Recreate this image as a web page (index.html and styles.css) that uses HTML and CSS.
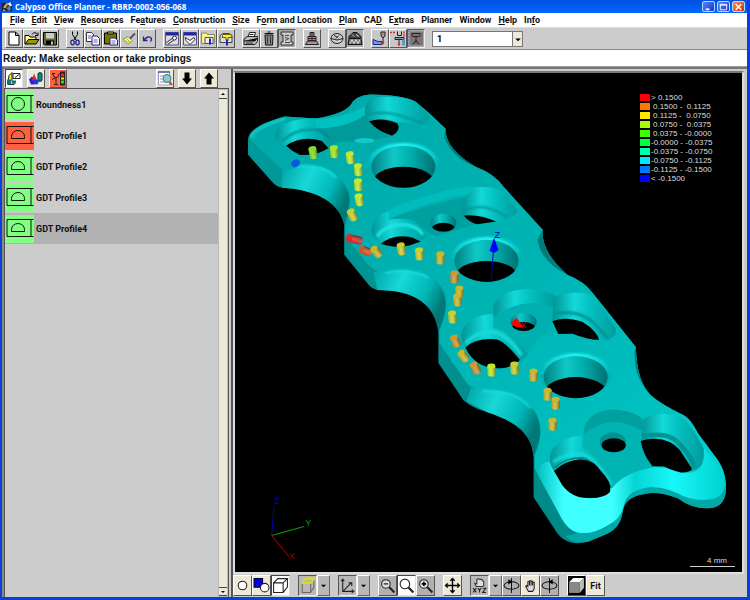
FILE: index.html
```
<!DOCTYPE html>
<html lang="en">
<head>
    <meta charset="UTF-8">
    <meta name="viewport" content="width=device-width, initial-scale=1">
    <title>Calypso Office Planner</title>
    <link rel="stylesheet" href="styles.css">
</head>
<body>
<div class="window">
    <header class="titlebar">
        <svg class="logo" viewBox="0 0 12 12"><path fill="#222" d="M0 2h11v9H0z"/><path fill="#d96" d="M1 7l4-5 2 1-3 5z"/><path fill="#eee" d="M6 3l3-2 2 4-2 1zM1 9l3 1-2 1z"/><path fill="#48c" d="M5 8l3-3 2 4-3 2z"/></svg>
        <h1>Calypso Office Planner - RBRP-0002-056-068</h1>
        <div class="controls">
            <button aria-label="Minimize"><svg viewBox="0 0 12 11"><path d="M3 8h4" stroke="#fff" stroke-width="2"/></svg></button>
            <button aria-label="Maximize"><svg viewBox="0 0 12 11"><path d="M2.5 2.5h7v6h-7zM2 3.5h8" fill="none" stroke="#fff"/></svg></button>
            <button class="close" aria-label="Close"><svg viewBox="0 0 12 11"><path d="M3 2.5l6 6M9 2.5l-6 6" stroke="#fff" stroke-width="1.6"/></svg></button>
        </div>
    </header>

    <nav class="menu">
        <button><u>F</u>ile</button>
        <button><u>E</u>dit</button>
        <button><u>V</u>iew</button>
        <button><u>R</u>esources</button>
        <button>Fe<u>a</u>tures</button>
        <button><u>C</u>onstruction</button>
        <button><u>S</u>ize</button>
        <button>F<u>o</u>rm and Location</button>
        <button><u>P</u>lan</button>
        <button>CA<u>D</u></button>
        <button>E<u>x</u>tras</button>
        <button>Planner</button>
        <button>Window</button>
        <button><u>H</u>elp</button>
        <button>In<u>f</u>o</button>
    </nav>

    <div class="toolbar">
        <div class="group">
            <button class="tool" aria-label="New"><svg viewBox="0 0 16 16"><path fill="#fff" stroke="#000" d="M3 1.500h6.500l3.500 3.500v9.500H3zM9.500 1.500V5H13"/></svg></button>
            <button class="tool" aria-label="Open"><svg viewBox="0 0 16 16"><path fill="#ff9" stroke="#000" d="M1 13.500V5h4l1 1.500h6V9"/><path fill="#990" stroke="#000" d="M1 13.500L4.500 9H15l-3 4.500z"/><path fill="none" stroke="#000" d="M8 4q3-4 5 0m1-2v3h-3"/></svg></button>
            <button class="tool" aria-label="Save"><svg viewBox="0 0 16 16"><path fill="#663" stroke="#000" d="M1.500 2h13v12.500h-12l-1-1z"/><path fill="#ccc" d="M4 2.500h8V8H4z"/><path fill="#000" d="M4 10h8v4H4z"/><path fill="#ccc" d="M9 11h2v3H9z"/></svg></button>
        </div>
        <div class="group">
            <button class="tool" aria-label="Cut"><svg viewBox="0 0 16 16"><path fill="none" stroke="#000" d="M5.500 1v3L9 9.500M10.500 1v3L7 9.500"/><g fill="none" stroke="#228" stroke-width="1.300"><ellipse cx="5.500" cy="12" rx="1.700" ry="2.300"/><ellipse cx="10.500" cy="12" rx="1.700" ry="2.300"/></g></svg></button>
            <button class="tool" aria-label="Copy"><svg viewBox="0 0 16 16"><path fill="#fff" stroke="#333" d="M1.500 2h5l2 2v7h-7z"/><path fill="#fff" stroke="#228" d="M7 5.500h5l2.500 2.500v6.500H7z"/><path stroke="#66a" d="M3 5.500h3M3 7.500h3M8.500 9.500h4M8.500 11.500h4"/></svg></button>
            <button class="tool" aria-label="Paste"><svg viewBox="0 0 16 16"><path fill="#770" stroke="#000" d="M1.500 2.500h12v11h-12z"/><path fill="#dd8" stroke="#000" d="M4.500 3.500v-2h6v2z"/><path fill="#fff" stroke="#228" d="M7 7.500h5l2.500 2v5H7z"/><path stroke="#66a" d="M8.500 10.500h4M8.500 12.500h4"/></svg></button>
            <button class="tool" aria-label="Copy format"><svg viewBox="0 0 16 16"><path fill="#ffb" stroke="#884" d="M2 9l5-3 4 4-4 4z"/><path stroke="#555" stroke-width="2" d="M9 8l5-5"/><path stroke="#aa0" d="M4 9l4 4M6 8l3 4"/></svg></button>
            <button class="tool" aria-label="Undo"><svg viewBox="0 0 16 16"><path fill="none" stroke="#228" stroke-width="1.300" d="M4.500 6v4h4M4.500 10q5-6 8-2 0 2-1 3"/></svg></button>
        </div>
        <div class="group">
            <button class="tool" aria-label="Settings"><svg viewBox="0 0 16 16"><path fill="#ddd" stroke="#558" d="M1.500 2h13v12.500h-13z"/><path fill="#22a" d="M2 2h12v3H2z"/><path stroke="#333" stroke-width="3" d="M3 13l7-5"/><path stroke="#fff" stroke-width="1.200" d="M3 13l7-5"/><circle cx="10.500" cy="7.500" r="2" fill="#fff" stroke="#333"/></svg></button>
            <button class="tool" aria-label="Check window"><svg viewBox="0 0 16 16"><path fill="#ddd" stroke="#558" d="M1.500 2h13v12.500h-13z"/><path fill="#22a" d="M2 2h12v3H2z"/><path fill="#fff" stroke="#333" d="M3 7l2 1 3 2 4-3 1 2-5 5-4-4z"/></svg></button>
            <button class="tool" aria-label="Plan folder"><svg viewBox="0 0 16 16"><path fill="#fe8" stroke="#886" d="M1.500 13V2.500h5l1 1.500h7v9z"/><path fill="#eee" stroke="#555" d="M5 7h8v6H5z"/><path stroke="#22c" stroke-width="2" d="M10 8v6"/></svg></button>
            <button class="tool" aria-label="Probe folder"><svg viewBox="0 0 16 16"><path fill="#ddd" stroke="#444" d="M2 5l3-2h6l3 2v7H2z"/><path fill="#fe3" stroke="#660" d="M5 4h8l1 3h-4v3H8V7H4z"/><path stroke="#22c" stroke-width="2" d="M9 9v6"/></svg></button>
        </div>
        <div class="group">
            <button class="tool" aria-label="Print"><svg viewBox="0 0 16 16"><path fill="#fff" stroke="#222" d="M5 7l1.500-5h6L11 7z"/><path fill="#bbb" stroke="#222" d="M1 8.500L4 6h10.500v5L12 14H1z"/><path stroke="#222" d="M1 10.500h11l2.500-3M6.500 4h4M3 12.500h7"/></svg></button>
            <button class="tool" aria-label="Delete"><svg viewBox="0 0 16 16"><path fill="#888" stroke="#111" d="M4 4.500h8l-.5 10h-7zM3.500 3h9M6.500 1.500h3"/><path stroke="#333" d="M6.500 6v7M9.500 6v7"/></svg></button>
            <button class="tool pressed" aria-label="Protocol"><svg viewBox="0 0 16 16"><path fill="#ccc" stroke="#333" d="M2 1.500h12v3h-2v7h2v3H2v-3h2v-7H2z"/><path fill="none" stroke="#444" d="M6 5h4M6 7l4 1-4 2M6 12h5"/></svg></button>
        </div>
        <div class="group">
            <button class="tool" aria-label="Machine"><svg viewBox="0 0 16 16"><path fill="#999" stroke="#222" d="M1.500 14l2-3.500h9l2 3.500zM4 10V6h8v4zM6 6V2h4v4M8 2v8M4 8h8"/><path stroke="#c22" d="M8 7v3"/></svg></button>
        </div>
        <div class="group">
            <button class="tool" aria-label="Probe sphere"><svg viewBox="0 0 16 16"><ellipse cx="8" cy="8" rx="6" ry="5" fill="#ccc" stroke="#222"/><path fill="none" stroke="#222" d="M2 8q6 3 12 0M5 5l4 2M10 5L7 8"/></svg></button>
            <button class="tool pressed" aria-label="Control panel"><svg viewBox="0 0 16 16"><path fill="#444" stroke="#111" d="M2 6l4-4h4l4 4v2H2z"/><path fill="#777" stroke="#111" d="M2 8h12l1 6H1z"/><path fill="none" stroke="#ddd" d="M5 4l2 2M9 4l3 2M3 13l2-4 2 4 2-4 2 4 2-4"/></svg></button>
        </div>
        <div class="group">
            <button class="tool" aria-label="Probe system"><svg viewBox="0 0 16 16"><path fill="#999" stroke="#222" d="M9 1.500h4v4l-2 2-2-2zM11 7v5"/><path fill="#69d" stroke="#228" d="M1 9l5 2h4v3H1z"/><circle cx="11" cy="12.500" r="1.200" fill="#d22"/></svg></button>
            <button class="tool" aria-label="Probe change"><svg viewBox="0 0 16 16"><path stroke="#e22" stroke-width="1.500" stroke-dasharray="2 1" d="M0 2h6M14 1v6"/><path fill="none" stroke="#222" d="M7.500 1v4h4V1"/><path fill="#999" stroke="#222" d="M5 7h9v2H5zM9 9v5"/><path fill="#69b" d="M12 9h3v6h-3z"/><circle cx="9" cy="14" r="1.200" fill="#d22"/></svg></button>
            <button class="tool pressed" aria-label="Navigator"><svg viewBox="0 0 16 16"><path fill="#777" d="M2 1h13v14H2z"/><path stroke="#22e" stroke-dasharray="1 2" d="M1 0v16"/><path fill="none" stroke="#222" d="M4 3h8v3H4zM8 6v6M5 14l3-4 3 4"/><path fill="none" stroke="#d33" d="M5 6l3 3 4-4"/></svg></button>
        </div>
        <div class="combo">
            <select aria-label="Probe number"><option>1</option><option>2</option></select>
            <span class="drop"><svg viewBox="0 0 8 8"><path d="M2 3h5L4.500 5.500z"/></svg></span>
        </div>
    </div>

    <p class="status">Ready: Make selection or take probings</p>

    <main class="work">
        <section class="side">
            <div class="sidebar-tools">
                <button class="tool light" aria-label="Measurement plan"><svg viewBox="0 0 16 16"><path fill="#ee2" stroke="#222" d="M3 5l3-3v9l2 1v2H2v-3z"/><path fill="#177" d="M1 9h4v5H1zM6 10h4v3H6z"/><path fill="#fff" stroke="#222" d="M7 3h7v5H7z"/><path stroke="#222" d="M9 7l4-3"/></svg></button>
                <button class="tool cream" aria-label="Features"><svg viewBox="0 0 16 16"><path fill="#22d" d="M1 9l3-3 4 4-2 4H3z"/><path fill="#e22" d="M6 3l3 7H4z"/><ellipse cx="8" cy="11.500" rx="2.500" ry="2.500" fill="#23f"/><path fill="#188" stroke="#033" d="M10 3q2-2 4 0v7q-2 2-4 0z"/></svg></button>
                <button class="tool alert" aria-label="Characteristics"><svg viewBox="0 0 16 16"><path fill="none" stroke="#222" d="M2.500 3l2 4h3l2-4M2 3h3M6 7v7M4 14h4M2 9l4-2"/><path fill="#222" d="M10 1h5v14h-5z"/><path fill="#e22" d="M11 3h3v3h-3z"/><path fill="#ee2" d="M11 7h3v2h-3z"/><path fill="#2d2" d="M11 10h3v3h-3z"/></svg></button>
                <span class="spacer"></span>
                <button class="tool cream" aria-label="Search"><svg viewBox="0 0 16 16"><path fill="#fff" stroke="#99b" d="M1.500 1.500h11v13h-11z"/><path fill="#22a" d="M1 1h12v1H1z"/><path stroke="#999" d="M3 5.500h4M3 8.500h3M3 11.500h5"/><circle cx="10" cy="8" r="4" fill="#8cc" stroke="#477"/><path stroke="#c44" stroke-width="2" d="M12.500 11.500l2.500 3"/></svg></button>
                <button class="tool cream" aria-label="Move down"><svg viewBox="0 0 16 16"><path d="M5.500 2h5v6H13l-5 6-5-6h2.500z"/></svg></button>
                <button class="tool cream" aria-label="Move up"><svg viewBox="0 0 16 16"><path d="M5.500 14h5V8H13L8 2 3 8h2.500z"/></svg></button>
            </div>
            <div class="list-box">
                <ul class="features">
                    <li><svg class="mark" viewBox="0 0 28 28"><path d="M28 4.500H1.500v17H28M25.500 4v18"/><circle cx="12.500" cy="13" r="6.500"/></svg>Roundness1</li>
                    <li><svg class="mark bad" viewBox="0 0 28 28"><use href="#profile"/></svg>GDT Profile1</li>
                    <li><svg class="mark" viewBox="0 0 28 28"><use href="#profile"/></svg>GDT Profile2</li>
                    <li><svg class="mark" viewBox="0 0 28 28"><use href="#profile"/></svg>GDT Profile3</li>
                    <li class="selected"><svg class="mark" viewBox="0 0 28 28"><use href="#profile"/></svg>GDT Profile4</li>
                </ul>
                <div class="scroll">
                    <button aria-label="Scroll up"><svg viewBox="0 0 8 8"><path d="M2 5h4L4 3z"/></svg></button>
                    <button aria-label="Scroll down"><svg viewBox="0 0 8 8"><path d="M2 3h4L4 5z"/></svg></button>
                </div>
            </div>
        </section>

        <section class="cad">
            <div class="view">
                <svg class="scene" viewBox="235 74 506 497" preserveAspectRatio="xMidYMid meet">
                    <defs>
                        <path id="profile" d="M28 4.500H1.500v17H28M25.500 4v18M6 16.500h13v-2a6.500 6 0 0 0-13 0z"/>
                        <linearGradient id="top" x1="0" y1="0" x2="1" y2="1"><stop offset="0" stop-color="#00a8a8"/><stop offset=".5" stop-color="#00b4b4"/><stop offset=".78" stop-color="#00c0c0"/><stop offset="1" stop-color="#08dede"/></linearGradient>
                        <linearGradient id="wall" x1="0" x2="1"><stop offset="0" stop-color="#008080"/><stop offset=".35" stop-color="#10c8c8"/><stop offset=".6" stop-color="#00b0b0"/><stop offset="1" stop-color="#007070"/></linearGradient>
                        <linearGradient id="pocket" x1="0" x2="1"><stop offset="0" stop-color="#009494"/><stop offset=".35" stop-color="#14d8d8"/><stop offset=".6" stop-color="#04c0c0"/><stop offset="1" stop-color="#009c9c"/></linearGradient>
                        <linearGradient id="curve" x1="0" y1="0" x2="1" y2=".4"><stop offset="0" stop-color="#00a4a4"/><stop offset=".4" stop-color="#18d8d8"/><stop offset=".75" stop-color="#00b8b8"/><stop offset="1" stop-color="#007878"/></linearGradient>
                        <linearGradient id="flat" x1="0" y1="0" x2="0" y2="1"><stop offset="0" stop-color="#009c9c"/><stop offset="1" stop-color="#008888"/></linearGradient>
                        <linearGradient id="chamfer" x1="0" x2="1"><stop offset="0" stop-color="#00c0c0"/><stop offset=".14" stop-color="#40ffff"/><stop offset=".4" stop-color="#40ffff"/><stop offset=".52" stop-color="#04d4d4"/><stop offset=".72" stop-color="#18f8f8"/><stop offset="1" stop-color="#00d0d0"/></linearGradient>
                        <linearGradient id="shade" x1="0" x2="1"><stop offset="0" stop-opacity=".1"/><stop offset=".4" stop-color="#fff" stop-opacity=".15"/><stop offset="1" stop-opacity=".45"/></linearGradient>
                        <radialGradient id="rim" cx=".5" cy=".15" r=".6"><stop offset="0" stop-color="#30ffff"/><stop offset=".5" stop-color="#10dcdc"/><stop offset="1" stop-color="#00b0b0"/></radialGradient>
                        <filter id="soft" x="-20%" y="-20%" width="140%" height="140%"><feGaussianBlur stdDeviation="1"/></filter>
                        <filter id="glow" x="-20%" y="-40%" width="140%" height="180%"><feGaussianBlur stdDeviation="3"/></filter>
                        <clipPath id="boreClip"><ellipse rx="32" ry="21" cy="1"/></clipPath>
                        <clipPath id="smallClip"><ellipse rx="13" ry="9"/></clipPath>
                        <g id="bore">
                            <ellipse rx="36" ry="22" cy="-1" fill="url(#rim)" filter="url(#soft)"/>
                            <ellipse rx="32" ry="21" cy="1" fill="url(#wall)"/>
                            <ellipse rx="32" ry="17" cy="18" clip-path="url(#boreClip)"/>
                        </g>
                        <g id="small">
                            <ellipse rx="13" ry="9" fill="url(#wall)"/>
                            <ellipse rx="12" ry="7" cy="7" clip-path="url(#smallClip)"/>
                        </g>
                        <g id="pin">
                            <path d="M-4-4v8a4 2.500 0 0 0 8 0v-8z"/>
                            <path fill="url(#shade)" d="M-4-4v8a4 2.500 0 0 0 8 0v-8z"/>
                            <ellipse cy="-4" rx="4" ry="2.500"/>
                        </g>
                    </defs>

                    <!-- plate body -->
                    <path fill="url(#flat)" d="M248 140Q249 126 285 117Q300 118 315 119Q342 115 350 106Q355 96 370 95Q400 95 415 102L428 113L445 129Q445 150 475 167Q494 174 503 187L542 230Q540 252 567 275Q583 281 592 293L635 347Q636 382 650 395Q660 404 683 415Q690 419 697 433L717 460Q726 474 725 490Q724 508 706 508Q690 508 677 498Q656 490 643 494Q624 497 622 511Q620 527 607 533L588 541Q564 548 553 527L533 497V457C532 440 524 424 487 412Q472 408 463 400L438 363V327C435 305 415 290 377 290Q370 288 367 283L344 255V222C340 204 318 190 282 188Q276 187 272 182L248 155z"/>
                    <path fill="url(#curve)" d="M282 170L298 166Q345 164 350 192Q350 204 344 226C340 204 318 190 282 188z"/>
                    <path fill="url(#curve)" d="M373 272L407 269C435 272 450 292 444 315L438 333C435 305 415 290 377 290z"/>
                    <path fill="url(#curve)" d="M470 388L507 390C533 396 544 424 538 440L533 457C532 440 524 424 487 412L466 401z"/>
                    <path fill="#00a8a8" d="M623 505Q630 488 653 486Q668 487 690 499L713 498Q723 494 725 480V490Q724 508 706 508Q690 508 677 498Q656 490 643 494Q624 497 622 511Q620 527 607 533L588 541Q572 544 565 536L577 532Q598 534 613 522Q621 514 623 505z"/>
                    <!-- top face -->
                    <path fill="url(#top)" d="M250 140Q251 127 285 117Q300 118 315 119Q342 115 350 106Q355 96 370 95Q400 95 415 102L428 113L445 129Q445 150 475 167Q494 174 503 187L542 230Q540 252 567 275Q583 281 592 293L635 347Q636 382 650 395Q660 404 683 415Q690 419 697 433L717 460Q726 474 724 486Q721 498 709 499Q690 501 677 493Q656 484 643 488Q626 492 623 505Q621 518 607 525Q590 535 577 532Q568 530 561 518L534 468V455Q546 430 534 411Q522 392 490 390Q473 391 467 384L439 343V330C448 310 450 290 431 278Q410 267 385 272Q375 273 368 265L345 236V226Q353 200 347 190Q338 170 315 166Q300 165 290 170Q281 171 274 162z"/>
                    <path fill="none" stroke="#18dede" stroke-width="2" filter="url(#soft)" d="M251 138Q252 129 285 119M298 167Q320 163 336 178M385 273Q410 267 428 278M482 391Q514 389 530 408"/>
                    <path fill="#007c7c" d="M445 129Q445 150 475 167Q452 158 444 138zM542 230Q540 252 567 275Q540 262 537 240zM635 347Q636 382 650 395Q632 376 634 350z"/>
                    <path fill="url(#chamfer)" d="M549 462Q568 492 588 498Q606 498 611 485Q622 472 653 467L668 468Q694 480 702 463L703 448L717 465Q726 476 724 486Q721 498 709 499Q690 501 677 493Q656 484 643 488Q626 492 623 505Q621 518 607 525Q590 535 577 532Q568 530 561 518L537 474Q540 460 549 462z"/>

                    <g transform="translate(235 80) scale(.3333)">
                        <!-- first recess -->
                        <path fill="#009a9a" d="M240 145Q330 145 390 90L405 125Q430 160 465 170Q390 190 320 185Q300 190 275 205z"/>
                        <path fill="#00c0c0" d="M230 118Q320 118 388 80L390 105Q340 145 240 147z"/>
                        <path fill="url(#pocket)" d="M120 170Q120 130 200 118L240 117V145Q290 170 282 206L265 190Q220 165 155 200Q125 185 120 170z"/>
                        <path fill="none" stroke="#008c8c" stroke-width="6" filter="url(#glow)" d="M140 185Q190 140 250 152Q280 165 284 185"/>
                        <path d="M153 198Q200 166 260 184L280 206Q250 222 232 225L195 226Q170 215 153 198z"/>
                        <path fill="url(#pocket)" d="M390 95Q390 52 440 52Q520 50 545 70L582 112Q580 138 548 137Q510 126 487 128Q440 110 402 125z"/>
                        <path fill="none" stroke="#009494" stroke-width="6" filter="url(#glow)" d="M395 105Q450 92 500 110L560 130"/>
                        <path d="M402 125Q440 112 487 132Q498 155 470 168Q425 155 402 125z"/>
                        <ellipse cx="388" cy="183" rx="30" ry="8" fill="#14c8c8"/>
                        <!-- second recess -->
                        <path fill="#00a0a0" d="M460 418Q570 375 720 345L700 400L730 430L600 470L520 420z"/>
                        <path fill="#00bcbc" d="M456 395Q500 365 600 342Q680 315 740 320L760 340Q690 338 580 372Q520 390 458 420z"/>
                        <path fill="url(#pocket)" d="M437 492Q400 465 412 435Q425 400 460 395V420Q560 405 572 470L555 485z"/>
                        <path fill="none" stroke="#20e4e4" stroke-width="10" filter="url(#glow)" d="M425 470Q455 430 510 435Q550 440 563 465"/>
                        <path d="M437 492Q475 460 530 473L556 485L520 498Q470 505 437 492z"/>
                    </g>

                    <g transform="translate(400 180) scale(.3333)">
                        <path fill="url(#pocket)" d="M185 100Q185 50 222 25Q280 15 310 40L350 92Q345 118 285 125Q240 105 190 107z"/>
                        <path fill="none" stroke="#009494" stroke-width="6" filter="url(#glow)" d="M190 92Q240 70 290 95L320 112"/>
                        <path d="M190 107Q235 102 287 125L230 133Q205 127 190 107z"/>
                        <!-- third recess -->
                        <path fill="#00b0b0" d="M280 400Q350 345 458 375L455 420Q460 460 430 465Q390 490 380 530L345 540L275 450z"/>
                        <path fill="url(#pocket)" d="M279 412V375Q310 325 390 327Q440 332 462 347L458 384Q370 345 279 412z"/>
                        <path fill="url(#pocket)" d="M195 503Q170 470 195 435Q230 400 278 402V445Q330 450 380 520L362 545L195 503z"/>
                        <path fill="none" stroke="#18d8d8" stroke-width="12" filter="url(#glow)" d="M196 490Q225 455 280 457Q320 462 362 525"/>
                        <path d="M195 503Q225 473 285 478Q310 480 358 540Q345 555 315 563Q230 575 195 503z"/>
                        <path fill="url(#pocket)" d="M460 350Q540 325 580 350L645 445Q650 475 615 480L455 425z"/>
                        <path fill="none" stroke="#009090" stroke-width="8" filter="url(#glow)" d="M458 402Q530 388 575 425L622 475"/>
                        <path d="M455 424Q490 408 545 425Q592 455 595 480Q560 478 515 461L473 462z"/>
                    </g>

                    <g transform="translate(510 380) scale(.3333)">
                        <!-- fourth recess -->
                        <path fill="#00b4b4" d="M220 160Q300 100 395 150L390 190L430 260Q340 275 303 325L215 220z"/>
                        <path fill="#00a0a0" d="M219 162V145Q235 95 300 88Q370 90 400 120L395 152Q300 95 219 162z"/>
                        <path fill="url(#pocket)" d="M130 272Q105 235 130 200Q160 170 215 165V205Q270 225 303 310L297 325z"/>
                        <path fill="none" stroke="#18dcdc" stroke-width="8" filter="url(#glow)" d="M127 245Q165 218 215 222Q260 235 302 312"/>
                        <path fill="none" stroke="#008888" stroke-width="5" d="M133 262Q165 232 215 233Q255 242 298 318"/>
                        <path d="M130 272Q165 240 210 237Q250 240 268 270Q305 305 298 335Q280 354 235 353Q185 355 155 315z"/>
                        <path fill="url(#pocket)" d="M390 180L400 115Q450 90 508 108Q545 135 578 205Q585 265 542 274L390 180z"/>
                        <path fill="none" stroke="#009494" stroke-width="14" d="M394 170Q465 152 500 185Q540 225 552 262"/>
                        <path d="M390 182Q420 172 455 178Q500 190 517 225L543 265Q545 276 510 277Q480 270 460 259L425 258Q395 220 390 182z"/>
                    </g>

                    <use href="#bore" x="403" y="166"/>
                    <use href="#bore" x="486" y="260"/>
                    <use href="#bore" x="575" y="376"/>
                    <use href="#small" x="443" y="223"/>
                    <use href="#small" x="523" y="322"/>
                    <g><ellipse cx="612" cy="442" rx="13" ry="10" fill="#009090"/><ellipse cx="613" cy="445" rx="12" ry="7"/></g>

                    <!-- measured points -->
                    <ellipse cx="295.500" cy="163.500" rx="4.500" ry="3.500" transform="rotate(-30 295.500 163.500)" fill="#0858e0"/>
                    <g fill="#80e030"><use href="#pin" transform="translate(313 153) rotate(-12)"/></g>
                    <g fill="#a4e828"><use href="#pin" transform="translate(334 152) rotate(-5)"/></g>
                    <g fill="#c0e830">
                        <use href="#pin" transform="translate(350 158) rotate(-8)"/>
                        <use href="#pin" transform="translate(358 170) rotate(-5)"/>
                        <use href="#pin" transform="translate(358 185) rotate(-4)"/>
                        <use href="#pin" transform="translate(359 200) rotate(-12)"/>
                        <use href="#pin" transform="translate(491 370) rotate(-3)"/>
                    </g>
                    <g fill="#c8d030">
                        <use href="#pin" transform="translate(352 215) rotate(-25)"/>
                        <use href="#pin" transform="translate(401 249) rotate(-10)"/>
                        <use href="#pin" transform="translate(419 254) rotate(-5)"/>
                        <use href="#pin" transform="translate(452 317) rotate(-5)"/>
                        <use href="#pin" transform="translate(514 368) rotate(-3)"/>
                    </g>
                    <g fill="#d03030"><use href="#pin" transform="translate(354 239.500) rotate(-76) scale(1 1.300)"/></g>
                    <g fill="#d05828"><use href="#pin" transform="translate(365 251) rotate(-70)"/></g>
                    <g fill="#c8b830">
                        <use href="#pin" transform="translate(376 252) rotate(-40)"/>
                        <use href="#pin" transform="translate(440 258)"/>
                        <use href="#pin" transform="translate(459 292)"/>
                        <use href="#pin" transform="translate(457 300) rotate(-5)"/>
                        <use href="#pin" transform="translate(463 356) rotate(-38)"/>
                        <use href="#pin" transform="translate(533 375)"/>
                        <use href="#pin" transform="translate(547 394)"/>
                        <use href="#pin" transform="translate(555 403)"/>
                        <use href="#pin" transform="translate(552 424)"/>
                    </g>
                    <g fill="#d09830">
                        <use href="#pin" transform="translate(454 277)"/>
                        <use href="#pin" transform="translate(455 341) rotate(-22)"/>
                        <use href="#pin" transform="translate(475 368) rotate(-28)"/>
                    </g>

                    <!-- part axes -->
                    <path stroke="#0000a0" d="M490.500 282L493 250"/>
                    <path fill="#00f" d="M493.500 238L498 250Q494 255 489 251z"/>
                    <path fill="#f00" d="M510 323L516 318L523 327Q516 329 510 323z"/>
                    <text class="axis" x="494" y="238" fill="#0000e0">Z</text>
                    <text class="axis" x="520" y="328" fill="#d00000">X</text>
                    <!-- orientation cross -->
                    <path stroke="#0000b0" d="M271.500 535L274 506"/>
                    <path stroke="#00a000" d="M271.500 535L304 526"/>
                    <path stroke="#a00000" d="M271.500 535L289 556"/>
                    <text class="axis" x="274" y="504" fill="#0000b0">Z</text>
                    <text class="axis" x="305" y="526" fill="#00a000">Y</text>
                    <text class="axis" x="289" y="559" fill="#a00000">X</text>
                </svg>

                <ul class="legend">
                    <li><i class="c1"></i>&gt; 0.1500</li>
                    <li><i class="c2"></i><span class="plus">0.1500 -&nbsp; 0.1125</span></li>
                    <li><i class="c3"></i><span class="plus">0.1125 -&nbsp; 0.0750</span></li>
                    <li><i class="c4"></i><span class="plus">0.0750 -&nbsp; 0.0375</span></li>
                    <li><i class="c5"></i><span class="plus">0.0375 - -0.0000</span></li>
                    <li><i class="c6"></i>-0.0000 - -0.0375</li>
                    <li><i class="c7"></i>-0.0375 - -0.0750</li>
                    <li><i class="c8"></i>-0.0750 - -0.1125</li>
                    <li><i class="c9"></i>-0.1125 - -0.1500</li>
                    <li><i class="c10"></i>&lt; -0.1500</li>
                </ul>
                <div class="scale">4 mm</div>
            </div>

            <div class="view-tools">
                <div class="group">
                    <button class="tool cream" aria-label="Wireframe"><svg viewBox="0 0 16 16"><circle cx="8" cy="8" r="4" fill="#fff" stroke="#222"/></svg></button>
                    <button class="tool cream" aria-label="Features"><svg viewBox="0 0 16 16"><path fill="#00e" stroke="#003" d="M1 1.500h8v8H1z"/><circle cx="11" cy="10" r="4" fill="#fff" stroke="#222"/></svg></button>
                    <button class="tool light" aria-label="CAD model"><svg viewBox="0 0 16 16"><path fill="#fff" stroke="#222" d="M1.500 5.500h9v9h-9zM1.500 5.500l4-4h9l-4 4M14.500 1.500v8l-4 5"/></svg></button>
                </div>
                <div class="group">
                    <button class="tool pressed" aria-label="Standard view"><svg viewBox="0 0 16 16"><path fill="none" stroke="#666" d="M3 5.500v9h8v-9M11 14l3-4V2"/><path fill="none" stroke="#dd2" stroke-width="1.500" d="M3 5.500l3-4h8.500l-3 4z"/></svg></button>
                    <button class="arrow" aria-label="More views"><svg viewBox="0 0 8 8"><path d="M1 3h6L4 6z"/></svg></button>
                </div>
                <div class="group">
                    <button class="tool pressed" aria-label="Coordinate system"><svg viewBox="0 0 16 16"><path fill="none" stroke="#222" d="M3.500 2v11.500H14M3.500 13.500l8-8M2 4l1.500-2L5 4M12 12l2 1.500L12 15M9 5.500h3v3"/></svg></button>
                    <button class="arrow" aria-label="More systems"><svg viewBox="0 0 8 8"><path d="M1 3h6L4 6z"/></svg></button>
                </div>
                <div class="group">
                    <button class="tool grey" aria-label="Zoom out"><svg viewBox="0 0 16 16"><circle cx="6.500" cy="6.500" r="4" fill="#ddd" stroke="#222"/><path stroke="#222" stroke-width="2" d="M9.500 9.500l5 5"/><path stroke="#000" d="M4.500 6.500h4"/></svg></button>
                    <button class="tool light" aria-label="Zoom window"><svg viewBox="0 0 16 16"><circle cx="6.500" cy="6.500" r="4.500" fill="#fff" stroke="#222"/><path stroke="#222" stroke-width="2" d="M10 10l4.500 4.500"/></svg></button>
                    <button class="tool grey" aria-label="Zoom in"><svg viewBox="0 0 16 16"><circle cx="6.500" cy="6.500" r="4" fill="#ddd" stroke="#222"/><path stroke="#222" stroke-width="2" d="M9.500 9.500l5 5"/><path stroke="#000" stroke-width="1.500" d="M4.500 6.500h4M6.500 4.500v4"/></svg></button>
                </div>
                <div class="group">
                    <button class="tool cream" aria-label="Pan"><svg viewBox="0 0 16 16"><path fill="none" stroke="#000" stroke-width="1.300" d="M8 1.500v13M1.500 8h13M6 3.500l2-2 2 2M6 12.500l2 2 2-2M3.500 6l-2 2 2 2M12.500 6l2 2-2 2"/></svg></button>
                </div>
                <div class="group">
                    <button class="tool pressed" aria-label="Rotate by hand"><svg viewBox="0 0 16 16"><path fill="#ddd" stroke="#333" d="M5 9L3.500 6l2 .5V2.500l1.500-1 1.500 1 1.500-.5L11 3.500l1 .5v4L11 9z"/><path fill="none" stroke="#222" d="M2 10.500l3 4M5 10.500l-3 4M6.500 10.500l1.500 2 1.500-2M8 12.500v2M11 10.500h3l-3 4h3"/></svg></button>
                    <button class="arrow" aria-label="Rotate options"><svg viewBox="0 0 8 8"><path d="M1 3h6L4 6z"/></svg></button>
                    <button class="tool grey" aria-label="Rotate left"><svg viewBox="0 0 16 16"><path fill="none" stroke="#111" d="M8 1v14"/><ellipse cx="8" cy="8" rx="7" ry="3.500" fill="none" stroke="#111"/><path d="M5 2l4 2.500L5 7z"/></svg></button>
                    <button class="tool cream" aria-label="Hand"><svg viewBox="0 0 16 16"><path fill="#ddd" stroke="#222" d="M6 13.500L3.500 9 4 8l1.500 1V4.500h1.500v-1h1.500v.5H10v1h1.500v6L10 13.500zM7 4.500V8M8.500 4V8M10 5v3"/></svg></button>
                    <button class="tool grey" aria-label="Rotate right"><svg viewBox="0 0 16 16"><path fill="none" stroke="#111" d="M8 1v14"/><ellipse cx="8" cy="8" rx="7" ry="3.500" fill="none" stroke="#111"/><path d="M11 2L7 4.500 11 7z"/></svg></button>
                </div>
                <div class="group">
                    <button class="tool dark" aria-label="Shaded"><svg viewBox="0 0 16 16"><path fill="#000" d="M0 0h16v16H0z"/><path fill="#888" d="M1 5h10v10H1z"/><path fill="#fff" d="M1 5l4-4h10l-4 4z"/><path fill="#bbb" d="M11 5l4-4v9l-4 5z"/></svg></button>
                    <button class="tool cream fit">Fit</button>
                </div>
            </div>
        </section>
    </main>
</div>
</body>
</html>
```
FILE: styles.css
```
*{
    box-sizing:border-box;
}
body{
    margin:0;
    font-family:Roboto, "Liberation Sans", sans-serif;
    font-size:9px;
    font-weight:700;
    color:#111;
}
button{
    font:inherit;
    color:inherit;
    padding:0;
    margin:0;
    border:0;
    background:none;
}
svg{
    display:block;
}
ul{
    list-style:none;
    margin:0;
    padding:0;
}
.window{
    display:flex;
    flex-direction:column;
    height:100vh;
    border:solid #0a3fd8;
    border-width:0 3px 3px 2px;
    background:#ccc;
}

/* title bar */
.titlebar{
    display:flex;
    align-items:center;
    height:13px;
    flex:none;
    gap:2px;
    background:linear-gradient(#0050e0, #0068ff);
    color:#fff;
}
.logo{
    width:11px;
    height:11px;
}
h1{
    flex:1;
    margin:0;
    font-size:8px;
    line-height:10px;
    font-family:"Open Sans", sans-serif;
    font-weight:700;
    white-space:nowrap;
}
.controls{
    display:flex;
    gap:2px;
    padding-right:2px;
}
.controls button{
    width:13px;
    height:11px;
    border:1px solid #adf;
    border-radius:2px;
    background:linear-gradient(135deg, #58f, #13c);
}
.controls .close{
    background:linear-gradient(135deg, #f86, #c30);
}

/* menu */
.menu{
    display:flex;
    flex:none;
    gap:7px;
    height:15px;
    padding-left:8px;
    background:#fff;
    border-bottom:1px solid #ddd;
}
.menu button{
    line-height:14px;
    white-space:nowrap;
}
.toolbar{
    display:flex;
    flex:none;
    align-items:center;
    gap:7px;
    height:22px;
    padding-left:3px;
    border-bottom:1px solid #888;
}
.group{
    display:flex;
}
.tool{
    width:18px;
    height:19px;
    flex:none;
    background:#c8c8c8;
    border:1px solid;
    border-color:#fff #555 #555 #fff;
}
.tool svg{
    width:100%;
    height:100%;
}
.pressed{
    background:#aaa;
    border-color:#555 #eee #eee #555;
}
.light{
    background:#fff;
    border-color:#444 #ddd #ddd #444;
}
.cream{
    background:#ece9d8;
}
.grey{
    background:#b0b0b0;
}
.alert{
    background:#ff6040;
}
.dark{
    background:#000;
}
.combo{
    display:flex;
    width:91px;
    height:16px;
    background:#fff;
    border:1px solid #777;
}
.combo select{
    flex:1;
    appearance:none;
    border:0;
    background:none;
    font:inherit;
    padding:0 4px;
}
.drop{
    width:10px;
    padding-top:3px;
    background:#ece9d8;
    border-left:1px solid #777;
}
.status{
    flex:none;
    margin:0;
    height:17px;
    line-height:17px;
    padding-left:1px;
    background:#fff;
    border-bottom:1px solid #999;
    font-family:"Liberation Sans", sans-serif;
    font-size:10px;
}

/* left side */
.work{
    display:flex;
    flex:1;
    min-height:0;
    border-top:2px solid #777;
}
.side{
    display:flex;
    flex-direction:column;
    width:227px;
    flex:none;
    border-left:2px solid #888;
}
.sidebar-tools{
    display:flex;
    flex:none;
    gap:4px;
    padding:0 11px 0 1px;
}
.spacer{
    flex:1;
}
.list-box{
    display:flex;
    flex:1;
    min-height:0;
    border:solid #555;
    border-width:1px 1px 0 1px;
}
.features{
    flex:1;
}
.features li{
    display:flex;
    align-items:center;
    gap:2px;
    height:31px;
}
.features .selected{
    background:#b2b2b2;
}
.mark{
    width:29px;
    height:28px;
    background:#80ff80;
    fill:none;
    stroke:#111;
}
.mark.bad{
    background:#ff6040;
}
.scroll{
    display:flex;
    flex-direction:column;
    justify-content:space-between;
    width:10px;
    background:#ece9d8;
    border:1px solid #bbb;
}
.scroll button{
    height:9px;
    border-bottom:1px solid #444;
}
.scroll button:last-child{
    border-top:1px solid #444;
}

/* cad window */
.cad{
    display:flex;
    flex:1;
    flex-direction:column;
    min-width:0;
    margin-left:2px;
    border-left:2px solid #555;
}
.view{
    position:relative;
    flex:1;
    min-height:0;
    margin:2px 3px 1px 0;
    border:2px solid #ddd;
    border-top-color:#777;
    background:#000;
}
.scene{
    width:100%;
    height:100%;
}
.axis{
    font-family:"Liberation Sans", sans-serif;
    font-size:9px;
    font-weight:400;
}
.legend{
    position:absolute;
    top:20px;
    right:29px;
    width:73px;
    color:#ddd;
    font-family:"Liberation Sans", sans-serif;
    font-size:8px;
    font-weight:400;
    line-height:9px;
    white-space:nowrap;
}
.legend li{
    display:flex;
    align-items:center;
    gap:1px;
}
.legend i{
    width:10px;
    height:7px;
}
.plus{
    padding-left:2px;
}
.c1{background:#f00;}
.c2{background:#ff7800;}
.c3{background:#ffe600;}
.c4{background:#aaff00;}
.c5{background:#3cff00;}
.c6{background:#00ff3c;}
.c7{background:#00ffaa;}
.c8{background:#00e6ff;}
.c9{background:#0078ff;}
.c10{background:#00f;}
.scale{
    position:absolute;
    right:7px;
    bottom:5px;
    width:45px;
    padding-right:8px;
    border-bottom:1px solid #ccc;
    color:#ddd;
    font-family:"Liberation Sans", sans-serif;
    font-size:8px;
    font-weight:400;
    line-height:10px;
    text-align:right;
}
.view-tools{
    display:flex;
    flex:none;
    gap:8px;
    padding-bottom:1px;
}
.view-tools .tool{
    width:19px;
    height:21px;
}
.view-tools .pressed,
.view-tools .arrow{
    background:#b8b8b8;
}
.arrow{
    width:13px;
    padding:2px;
    border:1px solid;
    border-color:#fff #666 #666 #fff;
}
```
